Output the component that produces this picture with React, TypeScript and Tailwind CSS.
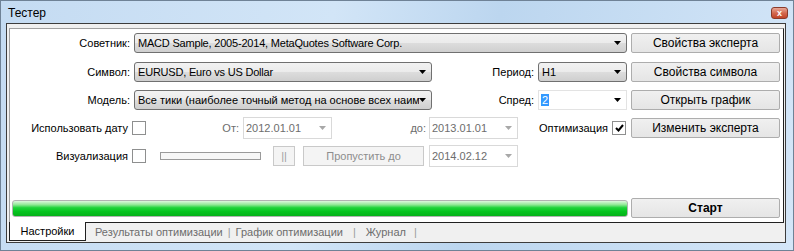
import React from "react";

const font = "font-['Liberation_Sans',Arial,sans-serif]";

function Arrow({ disabled }: { disabled?: boolean }) {
  return (
    <svg width="7" height="4" viewBox="0 0 7 4" className="shrink-0">
      <path d="M0 0H7L3.5 4Z" fill={disabled ? "#a8a8a8" : "#000"} />
    </svg>
  );
}

function Combo({ w, text, narrow }: { w: string; text: string; narrow?: boolean }) {
  return (
    <div
      className={`${w} h-[20px] flex items-center rounded-[3px] border border-[#707070] bg-[linear-gradient(#f2f2f2,#ebebeb_50%,#dddddd_50%,#cfcfcf)] pl-[3px] pr-[5px]`}
    >
      <div className={`min-w-0 flex-1 overflow-hidden whitespace-nowrap ${narrow ? "tracking-[-0.2px]" : ""}`}>{text}</div>
      <Arrow />
    </div>
  );
}

function Button({ w, children, bold }: { w: string; children: React.ReactNode; bold?: boolean }) {
  return (
    <div
      className={`${w} h-[20px] flex items-center justify-center rounded-[2px] border border-[#adadad] bg-[linear-gradient(#f0f0f0,#e5e5e5)] text-[12px] ${bold ? "font-bold" : ""}`}
    >
      {children}
    </div>
  );
}

function DateBox({ value }: { value: string }) {
  return (
    <div className="w-[89px] h-[22px] flex items-center border border-[#d9d9d9] bg-white pl-[2px] pr-[5px] text-[#6d6d6d]">
      <div className="flex-1">{value}</div>
      <Arrow disabled />
    </div>
  );
}

function Check({ checked }: { checked?: boolean }) {
  return (
    <div className="w-[14px] h-[14px] flex items-center justify-center border border-[#8e8f8f] bg-white">
      {checked && (
        <svg width="9" height="8" viewBox="0 0 9 8">
          <path d="M1 4L3.5 6.5L8 1" stroke="#000" strokeWidth="2" fill="none" />
        </svg>
      )}
    </div>
  );
}

export default function App() {
  return (
    <div className={`${font} w-[794px] h-[251px] flex flex-col border border-[#6f8296] bg-[linear-gradient(100deg,#c4dbf2,#d2e5f7_40%,#bcd6ef_60%,#d4e6f8)] text-[11px] text-black`}>
      {/* title bar */}
      <div className="h-[22px] flex items-center pl-[7px] pr-[5px] shrink-0">
        <span className="text-[12px] leading-none pt-[2px]">Тестер</span>
        <div className="ml-auto mt-[2px] w-[17px] h-[12px] flex items-center justify-center rounded-[3px] border border-[#8a3b2b] bg-[linear-gradient(#e8a898,#d4694f_50%,#c24428)] text-white text-[9px] font-bold leading-none">
          x
        </div>
      </div>

      {/* client area */}
      <div className="ml-[5px] mr-[7px] h-[220px] flex flex-col border border-[#3c3c3c] bg-[#f0f0f0] pl-[2px] pr-[1px] pt-[4px]">
        <div className="h-[195px] flex flex-col border-l border-t border-[#a0a0a0] border-r border-b border-r-[#202020] border-b-[#202020] bg-white pt-[4px]">
          {/* row 1 */}
          <div className="flex items-center h-[20px]">
            <div className="w-[120px] text-right">Советник:</div>
            <div className="ml-[4px]">
              <Combo w="w-[493px]" narrow text="MACD Sample, 2005-2014, MetaQuotes Software Corp." />
            </div>
            <div className="ml-[4px]">
              <Button w="w-[149px]">Свойства эксперта</Button>
            </div>
          </div>

          {/* row 2 */}
          <div className="flex items-center h-[20px] mt-[9px]">
            <div className="w-[120px] text-right">Символ:</div>
            <div className="ml-[4px]">
              <Combo w="w-[298px]" narrow text="EURUSD, Euro vs US Dollar" />
            </div>
            <div className="w-[102px] text-right">Период:</div>
            <div className="ml-[4px]">
              <Combo w="w-[89px]" text="H1" />
            </div>
            <div className="ml-[4px]">
              <Button w="w-[149px]">Свойства символа</Button>
            </div>
          </div>

          {/* row 3 */}
          <div className="flex items-center h-[20px] mt-[8px]">
            <div className="w-[120px] text-right">Модель:</div>
            <div className="ml-[4px]">
              <Combo
                w="w-[298px]"
                text="Все тики (наиболее точный метод на основе всех наименьших доступных таймфреймов)"
              />
            </div>
            <div className="w-[102px] text-right">Спред:</div>
            <div className="ml-[4px] w-[89px] h-[20px] flex items-center border border-[#e3e3e3] bg-white pl-[2px] pr-[5px]">
              <div className="flex-1">
                <span className="bg-[#3399ff] text-white px-[1px]">2</span>
              </div>
              <Arrow />
            </div>
            <div className="ml-[4px]">
              <Button w="w-[149px]">Открыть график</Button>
            </div>
          </div>

          {/* row 4 */}
          <div className="flex items-center h-[22px] mt-[7px]">
            <div className="w-[120px] text-right pr-[2px]">Использовать дату</div>
            <div className="ml-[2px]">
              <Check />
            </div>
            <div className="w-[93px] text-right text-[#6d6d6d]">От:</div>
            <div className="ml-[4px]">
              <DateBox value="2012.01.01" />
            </div>
            <div className="w-[94px] text-right text-[#6d6d6d]">до:</div>
            <div className="ml-[3px]">
              <DateBox value="2013.01.01" />
            </div>
            <div className="w-[90px] text-right">Оптимизация</div>
            <div className="ml-[4px]">
              <Check checked />
            </div>
            <div className="ml-[5px]">
              <Button w="w-[149px]">Изменить эксперта</Button>
            </div>
          </div>

          {/* row 5 */}
          <div className="flex items-center h-[22px] mt-[6px]">
            <div className="w-[120px] text-right pr-[2px]">Визуализация</div>
            <div className="ml-[2px]">
              <Check />
            </div>
            <div className="ml-[14px] w-[101px] h-[8px] border border-[#9a9a9a] bg-[#f7f7f7]" />
            <div className="ml-[12px] w-[22px] h-[20px] flex items-center justify-center border border-[#c9c9c9] bg-[#f4f4f4] text-[#a0a0a0]">
              ||
            </div>
            <div className="ml-[8px] w-[121px] h-[20px] flex items-center justify-center border border-[#c9c9c9] bg-[#f4f4f4] text-[#8d8d8d]">
              Пропустить до
            </div>
            <div className="ml-[5px]">
              <DateBox value="2014.02.12" />
            </div>
          </div>

          {/* progress row */}
          <div className="flex items-center h-[20px] mt-[31px]">
            <div className="ml-[2px] w-[616px] h-[17px] rounded-[3px] border border-[#b2b2b2] bg-[linear-gradient(#dff7df,#8fe895_25%,#1ed33a_45%,#06c41f_70%,#05b11a)]" />
            <div className="ml-[3px]">
              <Button w="w-[149px]" bold>
                Старт
              </Button>
            </div>
          </div>
        </div>

        {/* tabs */}
        <div className="flex items-start h-[19px] text-[#6d6d6d]">
          <div className="-mt-[1px] w-[77px] h-[19px] flex items-center justify-center border-l border-r border-b border-[#202020] bg-white text-black">
            Настройки
          </div>
          <div className="flex items-center h-[18px] pl-[9px]">
            <span>Результаты оптимизации</span>
            <span className="mx-[5px] text-[#9a9a9a]">|</span>
            <span>График оптимизации</span>
            <span className="mx-[10px] text-[#9a9a9a]">|</span>
            <span>Журнал</span>
            <span className="ml-[8px] text-[#9a9a9a]">|</span>
          </div>
        </div>
      </div>
    </div>
  );
}
